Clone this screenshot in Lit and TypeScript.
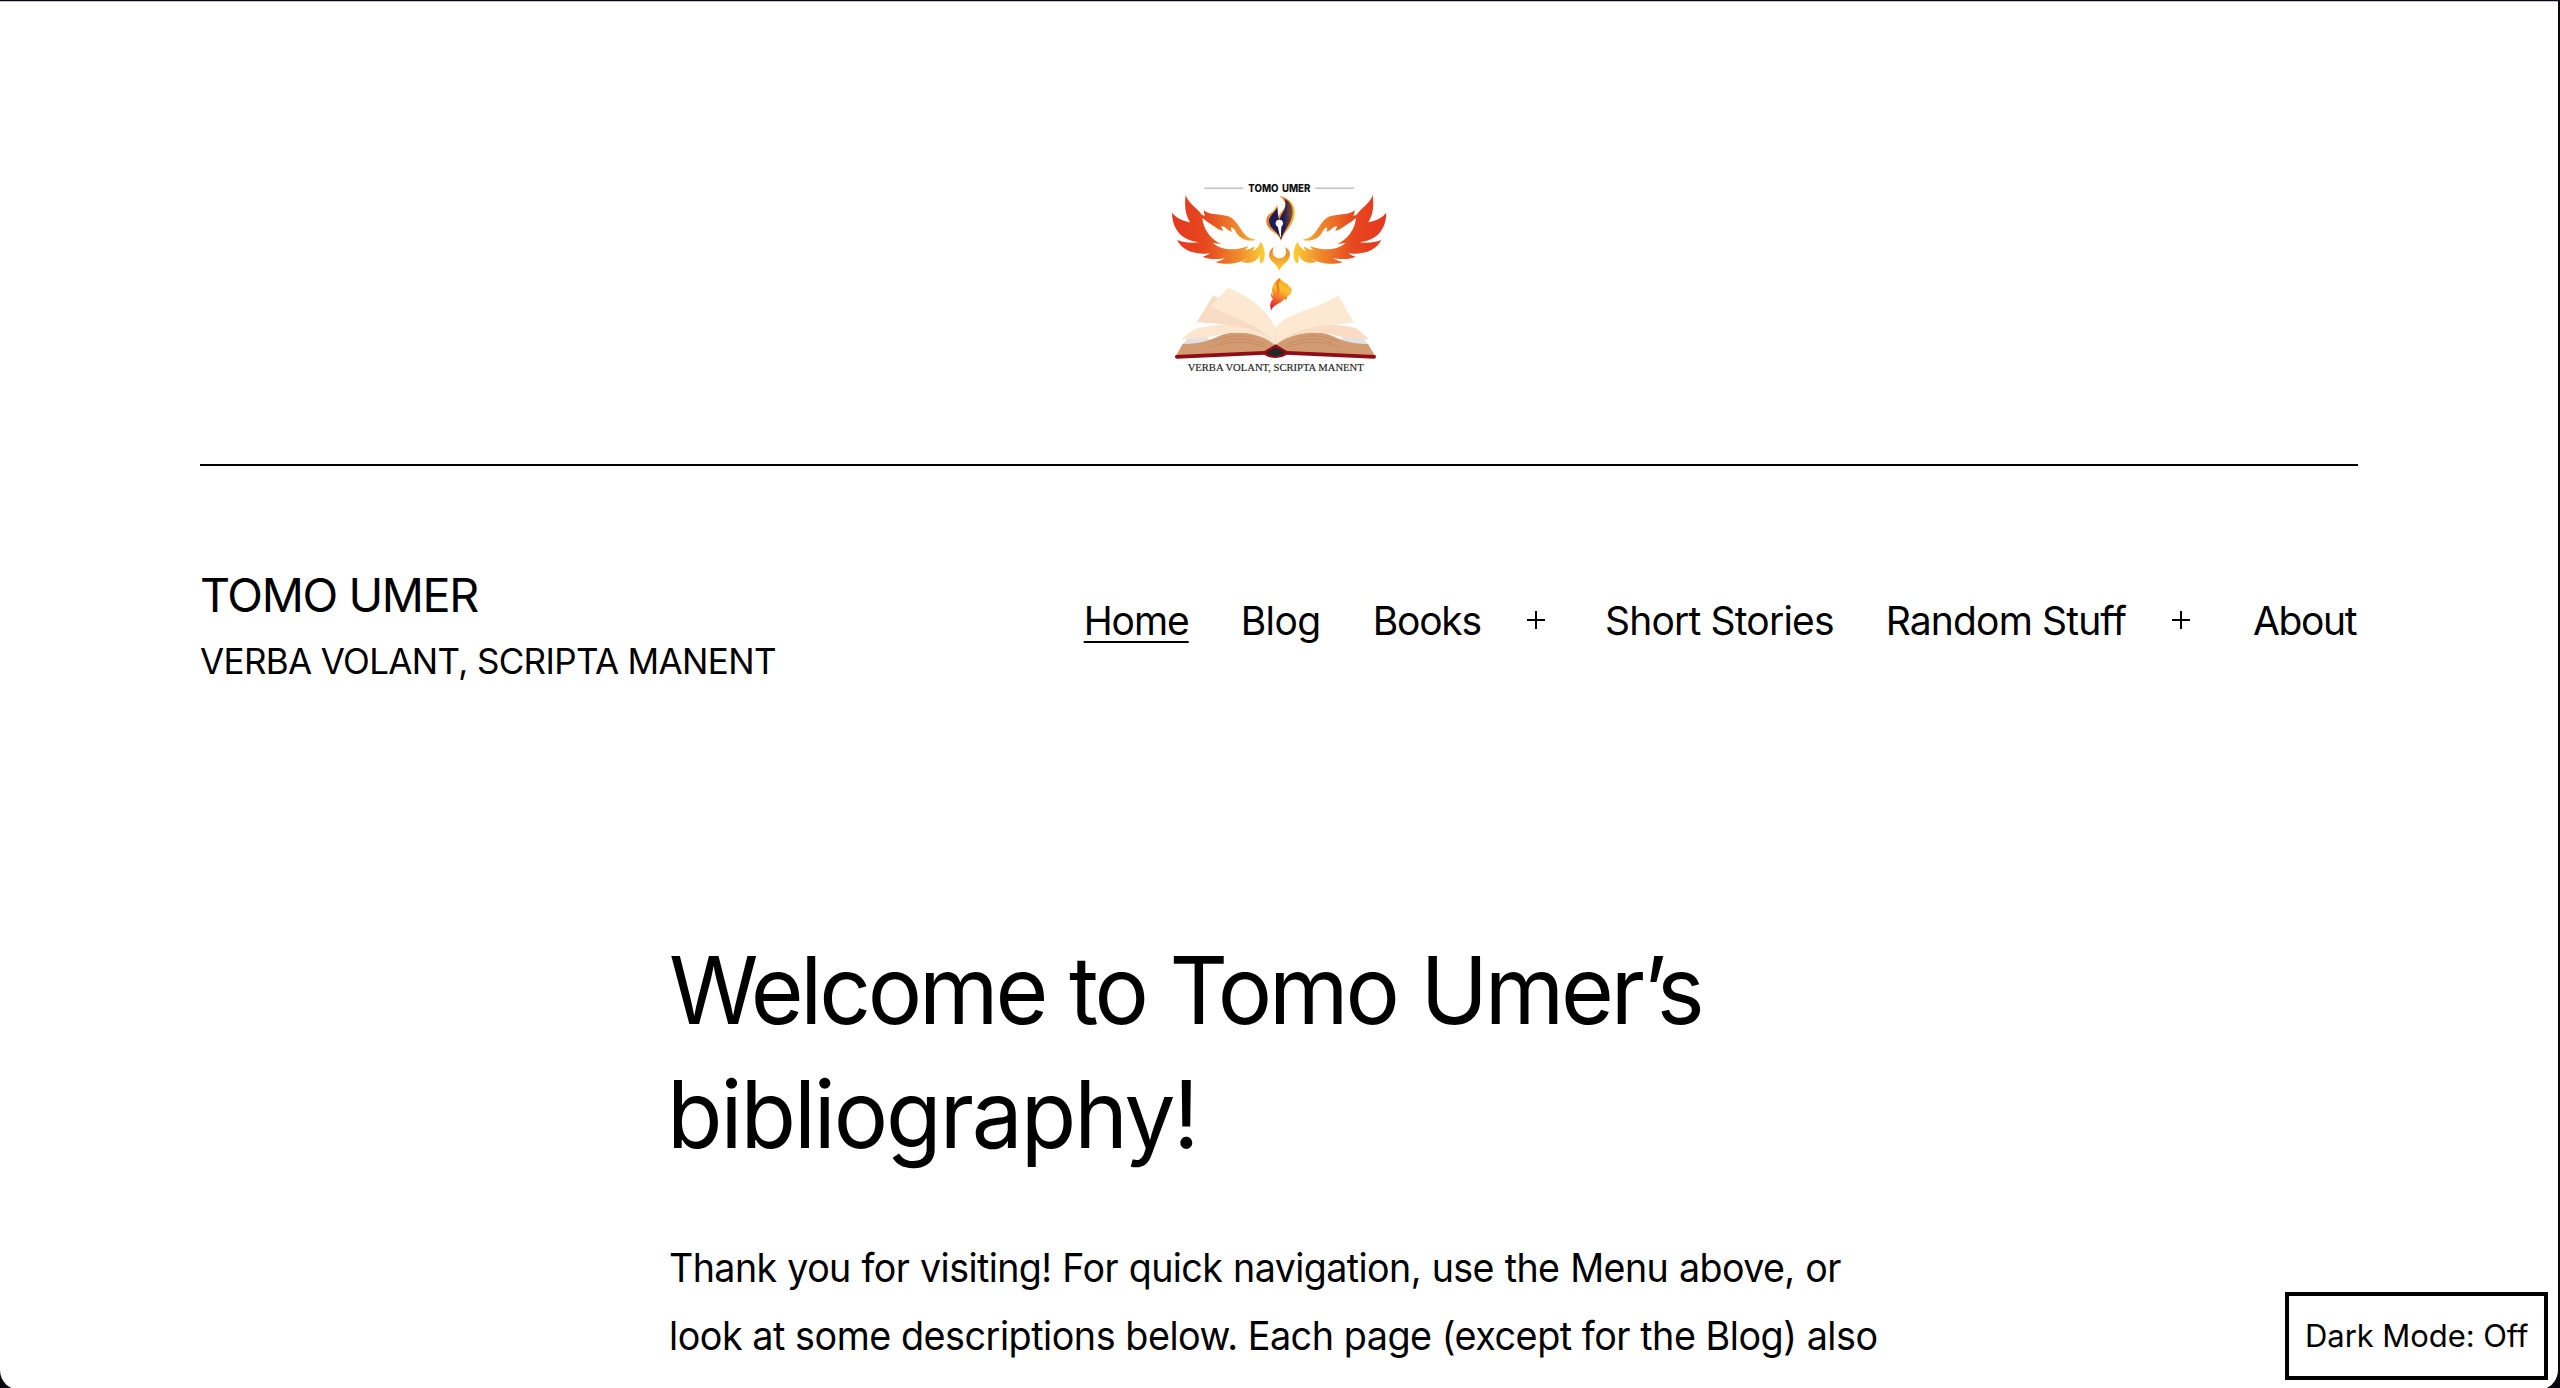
import { LitElement, html, css, svg } from "lit";
import { customElement, state } from "lit/decorators.js";

interface NavItem {
  label: string;
  tracking: number;
  current?: boolean;
  toggleWidth?: number;
}

const NAV: NavItem[] = [
  { label: "Home", tracking: -1.07, current: true },
  { label: "Blog", tracking: -0.57 },
  { label: "Books", tracking: -1.2, toggleWidth: 72 },
  { label: "Short Stories", tracking: -0.81 },
  { label: "Random Stuff", tracking: -0.85, toggleWidth: 75 },
  { label: "About", tracking: -1.4 },
];

@customElement("site-logo")
class SiteLogo extends LitElement {
  static styles = css`
    :host { display: block; width: 260px; height: 210px; }
    svg { display: block; width: 260px; height: 210px; }
    .name { font: 800 31px Inter, sans-serif; word-spacing: 4px; fill: #111; }
    .motto { font: 34px "Liberation Serif", serif; fill: #222; stroke: #222; stroke-width: 0.5px; }
  `;

  private wing() {
    return svg`<g transform="translate(54 60)">
      <path fill="url(#wing)" d="M53 15C62 42 86 52 101 74L111 78Q107 69 107 60C118 74 150 72 175 77C198 82 207 100 219 118C232 140 245 147 264 149C242 156 215 149 202 122Q198 115 190 112Q188 118 192 126Q178 121 171 112Q165 109 160 108Q160 115 166 124Q150 119 138 109Q120 98 103 84C106 118 128 148 159 162Q144 161 134 158C150 174 185 182 212 176Q228 173 242 168Q236 175 231 181Q246 178 261 169Q258 177 254 183Q272 175 278 155C290 170 294 195 287 212Q283 220 277 220Q274 210 276 194Q268 213 246 218Q230 219 221 215Q233 211 240 203C222 216 196 222 170 221Q152 221 142 216Q160 213 172 204C150 209 118 208 104 200Q118 196 126 190C105 193 75 190 58 181Q36 168 27 150C45 157 68 160 92 157C62 153 36 140 25 118Q12 96 12 68C26 86 46 92 66 97Q46 66 53 15Z"/>
    </g>`;
  }

  render() {
    return html`<svg viewBox="-3 0 780 630" role="img" aria-label="Tomo Umer">
      <defs>
        <linearGradient id="wing" gradientUnits="userSpaceOnUse" x1="20" y1="0" x2="290" y2="0">
          <stop offset="0" stop-color="#e5381f" /><stop offset=".35" stop-color="#e6491f" />
          <stop offset=".72" stop-color="#f08c2c" /><stop offset="1" stop-color="#f9cf36" />
        </linearGradient>
        <linearGradient id="orb" x1="0" y1="0" x2="0" y2="1">
          <stop offset="0" stop-color="#ec7a2c" /><stop offset=".5" stop-color="#f5a62c" /><stop offset="1" stop-color="#fbd034" />
        </linearGradient>
        <linearGradient id="fire" x1=".6" y1="0" x2=".3" y2="1">
          <stop offset="0" stop-color="#f5a623" /><stop offset=".35" stop-color="#fbc02e" />
          <stop offset=".65" stop-color="#f2702a" /><stop offset="1" stop-color="#e8172f" />
        </linearGradient>
        <linearGradient id="rim" x1="0" y1="0" x2="1" y2="0">
          <stop offset="0" stop-color="#ee6a28" /><stop offset=".35" stop-color="#f7b52c" />
          <stop offset=".6" stop-color="#ee7a28" /><stop offset="1" stop-color="#f9c22f" />
        </linearGradient>
        <linearGradient id="ink" x1="0" y1="0" x2="1" y2="0">
          <stop offset="0" stop-color="#1c1c58" /><stop offset=".62" stop-color="#1f1b55" /><stop offset="1" stop-color="#8a5230" />
        </linearGradient>
      </defs>

      <path d="M163 54.500H280M495 54.500H612" stroke="#777" stroke-width="2" />
      <text class="name" x="295" y="66" textLength="186" lengthAdjust="spacingAndGlyphs">TOMO UMER</text>

      ${this.wing()}
      <g transform="translate(775 0) scale(-1 1)">${this.wing()}</g>

      <path fill="url(#rim)" d="M388 77C420 84 437 106 434 133C431 168 405 180 393 212C386 188 349 184 349 152C350 130 376 126 380 104C385 112 384 130 386 142C390 122 410 118 405 98Q401 86 388 77Z" />
      <path fill="url(#ink)" d="M404 86C424 96 431 116 427 135C421 168 400 180 393 209C387 186 358 180 357 152C358 136 376 126 382 112C383 128 384 140 388 150C392 130 414 118 404 86Z" />
      <circle cx="388" cy="160" r="11" fill="#fff" />
      <path fill="#fff" d="M383 168H394L392.500 202H390.500Z" />

      <path fill="url(#orb)" d="M373 231C354 240 353 262 366 274C376 283 383 290 388 303C393 290 401 283 411 274C424 261 424 240 404 231C413 242 408 265 388 265C368 265 363 242 373 231Z" />

      <path fill="url(#fire)" d="M364 421C357 406 361 395 369 387Q360 379 364 367Q366 376 370 377C360 356 370 336 389 323C394 337 420 339 418 355Q421 353 422 349Q427 362 423 370Q420 377 413 377Q411 388 406 392Q406 386 403 386C397 400 371 400 364 421Z" />
      <path fill="none" stroke="#ee7426" stroke-width="6" stroke-linecap="round" d="M387 330C372 345 392 352 384 370" />

      <path fill="#e1e1e1" d="M112 506L96 524L180 518L170 496ZM640 504L655 524L570 518L580 494Z" />
      <path fill="#d29b72" d="M98 522L77 559L345 547L375 524C330 488 260 480 215 495C175 512 155 521 98 522Z" />
      <path fill="#d29b72" d="M654 522L676 559L410 547L377 524C424 488 494 480 540 495C580 512 597 521 654 522Z" />
      <path fill="none" stroke="#c48a62" stroke-width="2.500" d="M180 533C235 512 290 512 346 531M207 520C255 500 300 504 345 523M188 515C240 495 270 494 300 502M572 533C519 512 465 512 410 531M547 520C500 500 455 504 412 523M566 515C515 495 485 494 455 502" />
      <path fill="#fce6cf" d="M93 508L133 477C200 462 330 440 376 524C330 486 262 482 215 492C170 506 135 506 93 508Z" />
      <path fill="#f9dcc3" d="M658 508L618 474C540 460 425 440 378 524C424 486 492 482 540 492C583 506 616 506 658 508Z" />
      <path fill="#f8dbc3" d="M190 376L140 457C225 462 330 468 375 522C360 460 270 420 190 376Z" />
      <path fill="#fde8d2" d="M234 353L183 407C245 445 330 460 377 524V474C350 420 305 382 234 353Z" />
      <path fill="#fde8d2" d="M564 376L612 458C530 466 425 470 377 524V474C412 424 495 424 564 376Z" />
      <path stroke="#f3d3b8" stroke-width="2" d="M376.500 478V523" />
      <path fill="#8f0d16" d="M77 555L343 543L377 523L411 543L676 555Q681 565 673 566L411 554Q395 564 377 564Q358 564 343 554L80 566Q72 564 77 555Z" />
      <path fill="#1b2a2a" d="M350 547L377 533L404 547Q390 558 377 558Q364 558 350 547Z" />

      <text class="motto" x="113" y="604" textLength="528" lengthAdjust="spacingAndGlyphs">VERBA VOLANT, SCRIPTA MANENT</text>
    </svg>`;
  }
}

@customElement("site-nav")
class SiteNav extends LitElement {
  static styles = css`
    :host { display: block; }
    .menu { display: flex; gap: 52px; margin: 0; padding: 0; list-style: none; }
    .item { display: flex; align-items: flex-start; }
    .link { color: #000; text-decoration: none; white-space: pre; }
    .current { text-decoration: underline; text-decoration-thickness: 2px; text-underline-offset: 6px; text-decoration-skip-ink: none; }
    .toggle { box-sizing: border-box; padding: 14px 0 0 46px; border: 0; background: none; text-align: left; font-size: 0; line-height: 0; }
    .plus { display: block; width: 18px; height: 18px; }
  `;

  render() {
    return html`<ul class="menu">
      ${NAV.map((item) => html`<li class="item">
        <a class="link ${item.current ? "current" : ""}" style="letter-spacing:${item.tracking}px">${item.label}</a>
        ${item.toggleWidth
          ? html`<button class="toggle" style="width:${item.toggleWidth}px" aria-label="Open menu">
              <svg class="plus" viewBox="0 0 18 18"><path d="M0 9H18M9 0V18" stroke="#000" stroke-width="2" /></svg>
            </button>`
          : ""}
      </li>`)}
    </ul>`;
  }
}

@customElement("app-root")
class AppRoot extends LitElement {
  static styles = css`
    :host { display: block; font-family: Inter, "Liberation Sans", sans-serif; color: #000; }
    .frame { box-sizing: border-box; height: 1388px; padding-top: 1px; overflow: hidden; background: #08080f; }
    .window { box-sizing: border-box; position: relative; width: 2558px; height: 1389px; padding: 0 200px; border-top: 1px solid #c4c0c4; border-radius: 0 0 20px 20px; background: #fff; overflow: hidden; }
    .logo { display: flex; justify-content: center; padding: 168px 0 84px; border-bottom: 2px solid #000; }
    .header { display: flex; justify-content: space-between; align-items: flex-start; padding-top: 98px; }
    .brand { display: flex; flex-direction: column; gap: 8px; }
    .title { margin: 0; font-size: 46.7px; line-height: 62px; font-weight: 400; letter-spacing: -1.4px; }
    .tagline { margin: 0; font-size: 35px; line-height: 54px; letter-spacing: -0.65px; }
    .nav { padding: 33px 2px 0 0; font-size: 39px; line-height: 48px; }
    .content { width: 1220px; margin: 240px auto 0; white-space: nowrap; }
    .heading { margin: 0 0 58px; font-size: 93.6px; line-height: 124px; font-weight: 400; }
    .line { display: block; transform-origin: 0 0; }
    .heading .first { letter-spacing: -3.3px; word-spacing: 1.5px; transform: scaleX(0.97); }
    .heading .second { letter-spacing: -2.15px; margin-left: -2px; transform: scaleX(0.97); }
    .intro { margin: 0; font-size: 39px; line-height: 68px; }
    .intro .first { letter-spacing: -0.6px; word-spacing: 0.8px; transform: scaleX(0.964); }
    .intro .second { letter-spacing: -0.5px; transform: scaleX(0.968); }
    .dark-toggle { box-sizing: border-box; position: absolute; left: 2285px; top: 1290px; width: 263px; height: 88px; padding: 0 0 0 16px; border: 4px solid #000; background: #fff; color: #000; font: 31px/80px Inter, sans-serif; letter-spacing: -0.07px; text-align: left; white-space: nowrap; }
  `;

  @state() private dark = false;

  render() {
    return html`<div class="frame">
      <div class="window">
        <div class="logo"><site-logo></site-logo></div>
        <header class="header">
          <div class="brand">
            <h1 class="title">TOMO UMER</h1>
            <p class="tagline">VERBA VOLANT, SCRIPTA MANENT</p>
          </div>
          <site-nav class="nav"></site-nav>
        </header>
        <main class="content">
          <h2 class="heading"><span class="line first">Welcome to Tomo Umer’s</span><span class="line second">bibliography!</span></h2>
          <p class="intro"><span class="line first">Thank you for visiting! For quick navigation, use the Menu above, or</span><span class="line second">look at some descriptions below. Each page (except for the Blog) also</span></p>
        </main>
        <button class="dark-toggle" @click=${() => (this.dark = !this.dark)}>Dark Mode: ${this.dark ? "On" : "Off"}</button>
      </div>
    </div>`;
  }
}
